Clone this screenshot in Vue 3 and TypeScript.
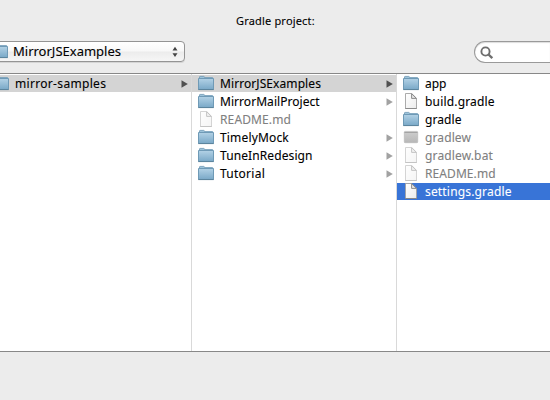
<script setup lang="ts">
type Kind = 'folder' | 'file' | 'exec'
interface Entry {
  name: string
  kind: Kind
  spacing: number
  dim?: boolean
  arrow?: boolean
  state?: 'open' | 'selected'
}
interface Column {
  id: string
  entries: Entry[]
}

const columns: Column[] = [
  { id: 'first', entries: [{ name: 'mirror-samples', kind: 'folder', spacing: 0.32, arrow: true, state: 'open' }] },
  {
    id: 'second',
    entries: [
      { name: 'MirrorJSExamples', kind: 'folder', spacing: 0.08, arrow: true, state: 'open' },
      { name: 'MirrorMailProject', kind: 'folder', spacing: 0.05, arrow: true },
      { name: 'README.md', kind: 'file', spacing: 0.12, dim: true },
      { name: 'TimelyMock', kind: 'folder', spacing: 0.16, arrow: true },
      { name: 'TuneInRedesign', kind: 'folder', spacing: 0.1, arrow: true },
      { name: 'Tutorial', kind: 'folder', spacing: 0.26, arrow: true },
    ],
  },
  {
    id: 'third',
    entries: [
      { name: 'app', kind: 'folder', spacing: 0 },
      { name: 'build.gradle', kind: 'file', spacing: 0.18 },
      { name: 'gradle', kind: 'folder', spacing: 0.08 },
      { name: 'gradlew', kind: 'exec', spacing: 0.11, dim: true },
      { name: 'gradlew.bat', kind: 'file', spacing: 0.14, dim: true },
      { name: 'README.md', kind: 'file', spacing: 0.08, dim: true },
      { name: 'settings.gradle', kind: 'file', spacing: 0.17, state: 'selected' },
    ],
  },
]
</script>

<template>
  <main class="dialog">
    <svg class="defs" width="0" height="0">
      <defs>
        <linearGradient id="folderFill" x1="0" y1="0" x2="0" y2="1">
          <stop offset="0" stop-color="#b3d2e6" />
          <stop offset="1" stop-color="#79a8c7" />
        </linearGradient>
        <linearGradient id="execFill" x1="0" y1="0" x2="0" y2="1">
          <stop offset="0" stop-color="#cecece" />
          <stop offset="1" stop-color="#b7b7b7" />
        </linearGradient>
        <linearGradient id="fileFill" x1="0" y1="0" x2="1" y2="1">
          <stop offset="0" stop-color="#fff" />
          <stop offset="1" stop-color="#ececec" />
        </linearGradient>
        <symbol id="folder" viewBox="0 0 16 16">
          <path d="M1.5 4V2Q1.5 1.4 2.1 1.4H5.7Q6.3 1.4 6.4 2L6.6 2.6H14.6V4Z" fill="#9dc3da" stroke="#6c97b4" stroke-width=".8" />
          <path d="M.5 3.5H15.5V14.5H.5Z" fill="url(#folderFill)" stroke="#6f9ab6" />
          <path d="M.3 14.6H15.7" stroke="#557d95" stroke-width=".8" />
        </symbol>
        <symbol id="file" viewBox="0 0 16 16">
          <path d="M2.5 .5H8.7L13.5 5.3V15.5H2.5Z" fill="url(#fileFill)" stroke="#a2a2a2" stroke-width=".9" />
          <path d="M8.6 .7V5.4H13.3Z" fill="#e9e9e9" stroke="#808080" stroke-width=".9" />
          <path d="M2.2 15.6H13.8" stroke="#777" stroke-width=".7" />
        </symbol>
        <symbol id="exec" viewBox="0 0 16 16">
          <rect x="1.3" y="2.4" width="13.4" height="11.3" rx=".8" fill="url(#execFill)" stroke="#b8b8b8" stroke-width=".7" />
          <path d="M1.5 3.5H14.5" stroke="#a4a4a4" />
        </symbol>
      </defs>
    </svg>

    <h1 class="title">Gradle project:</h1>
    <div class="toolbar">
      <button class="location" type="button">
        <svg class="location-icon"><use href="#folder" /></svg>
        <span class="location-name">MirrorJSExamples</span>
        <svg class="stepper" viewBox="0 0 6 12">
          <path d="M3 .7L5.5 4.6H.5ZM.5 7.2H5.5L3 11.1Z" fill="#444" />
        </svg>
      </button>
      <div class="search">
        <svg class="glass" viewBox="0 0 14 14">
          <circle cx="5.5" cy="5.5" r="4.1" fill="none" stroke="#6e6e6e" stroke-width="1.9" />
          <path d="M8.5 8.5L12.3 12.2" stroke="#6e6e6e" stroke-width="2.4" />
        </svg>
      </div>
    </div>

    <div class="browser">
      <ul v-for="col in columns" :key="col.id" class="column" :class="col.id">
        <li v-for="e in col.entries" :key="e.name" class="row" :class="[e.state, e.kind, { dim: e.dim }]">
          <svg class="icon"><use :href="'#' + e.kind" /></svg>
          <span class="name" :style="{ letterSpacing: e.spacing + 'px' }">{{ e.name }}</span>
          <svg v-if="e.arrow" class="arrow" viewBox="0 0 7 8"><path d="M.5 .2L6.8 4L.5 7.8Z" /></svg>
        </li>
      </ul>
    </div>
  </main>
</template>

<style>
body {
  background: #ececec;
}
</style>

<style scoped>
.dialog {
  width: 550px;
  height: 400px;
  overflow: hidden;
  background: #ececec;
  color: #000;
  font: 12px/18px "Noto Sans", "Open Sans", sans-serif;
  -webkit-text-stroke: .1px currentColor;
  display: flex;
  flex-direction: column;
}
.defs {
  position: absolute;
}
.title {
  margin: 0;
  padding: 13px 0 0 236px;
  height: 28px;
  box-sizing: border-box;
  font-size: 11px;
  font-weight: 400;
  line-height: 15px;
  letter-spacing: .18px;
  white-space: nowrap;
}
.toolbar {
  height: 45px;
  display: flex;
  justify-content: space-between;
}
.location {
  display: flex;
  align-items: center;
  box-sizing: border-box;
  width: 195px;
  height: 21px;
  margin: 13px 0 0 -10px;
  padding: 0 6px 0 1px;
  border: 1px solid #949494;
  border-radius: 4px;
  background: linear-gradient(#fff, #f8f8f8 48%, #ececec 52%, #f6f6f6);
  box-shadow: 0 1px 0 #d4d4d4;
  font: inherit;
  font-size: 13px;
  color: inherit;
}
.location-icon {
  width: 16px;
  height: 16px;
  margin-top: -1px;
  flex: none;
}
.location-name {
  margin: -1px 0 0 5px;
  white-space: nowrap;
}
.stepper {
  width: 6px;
  height: 12px;
  margin-left: auto;
}
.search {
  box-sizing: border-box;
  width: 76px;
  height: 22px;
  margin-top: 13px;
  padding: 4px 0 0 5px;
  border: 1px solid #9a9a9a;
  border-right: 0;
  border-radius: 11px 0 0 11px;
  background: #fff;
  box-shadow: inset 0 1px 1px #ddd;
}
.glass {
  display: block;
  width: 14px;
  height: 14px;
}
.browser {
  box-sizing: border-box;
  height: 279px;
  border-top: 1px solid #888;
  border-bottom: 1px solid #888;
  background: #fff;
  display: grid;
  grid-template-columns: 192px 205px 153px;
}
.column {
  list-style: none;
  margin: 0;
  padding: 1px 0 0;
  border-right: 1px solid #d9d9d9;
  min-width: 0;
}
.third {
  border-right: 0;
}
.row {
  display: flex;
  align-items: center;
  box-sizing: border-box;
  height: 17px;
  margin-bottom: 1px;
  padding: 0 3px 0 6px;
  white-space: nowrap;
}
.first .row {
  padding-left: 0;
}
.first .icon {
  margin-left: -7px;
}
.icon {
  width: 16px;
  height: 16px;
  flex: none;
  align-self: flex-start;
}
.name {
  margin-left: 6px;
  line-height: 17px;
}
.arrow {
  width: 7px;
  height: 8px;
  margin-left: auto;
  fill: #a2a2a2;
}
.open {
  background: #d4d4d4;
}
.open .arrow {
  fill: #505050;
}
.dim .name {
  color: #808080;
}
.dim.file .icon {
  opacity: .5;
}
.selected {
  background: #3874d7;
  color: #fff;
}
</style>
